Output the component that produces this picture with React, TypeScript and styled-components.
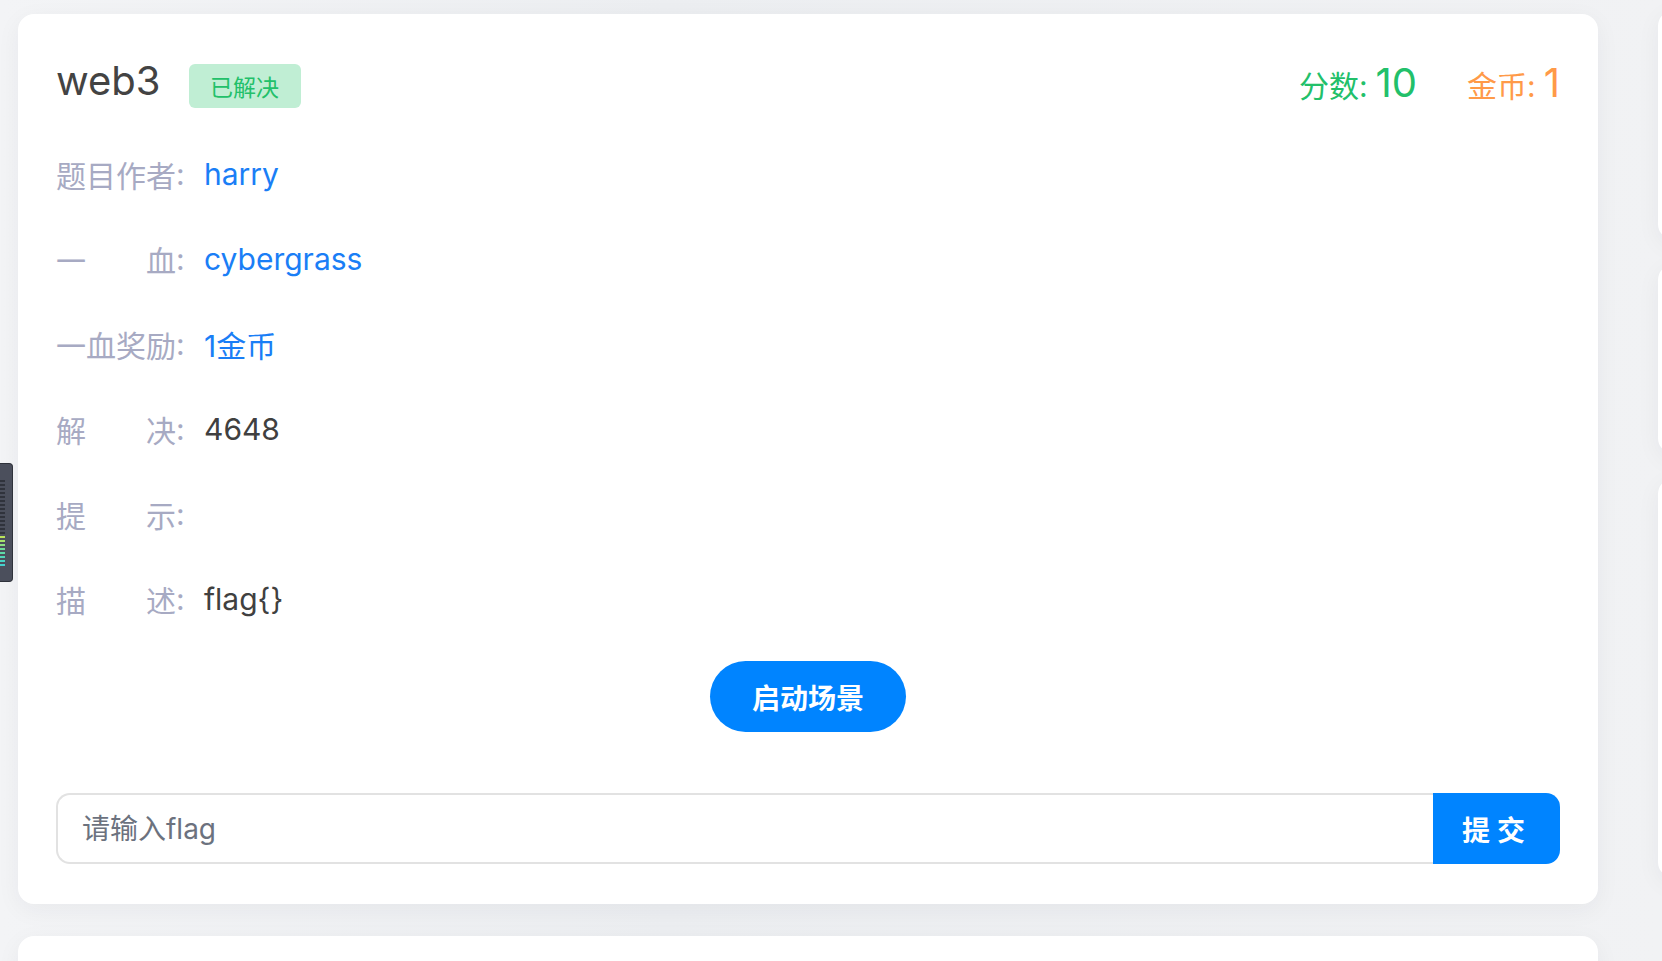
import React, { useState } from 'react'
import styled, { createGlobalStyle } from 'styled-components'

const GlobalStyle = createGlobalStyle`
  html, body {
    margin: 0;
    padding: 0;
    background: #eff0f3;
  }
  body {
    font-family: Inter, "Noto Sans CJK SC", "Noto Sans", sans-serif;
    color: #444;
  }
  * {
    box-sizing: border-box;
  }
`

const Page = styled.div`
  display: flex;
  gap: 60px;
  height: 961px;
  overflow: hidden;
  padding: 14px 0 0 18px;
  background: linear-gradient(90deg, #f3f4f6 0%, #eceef1 40%, #f1f2f4 100%);
`

const MainColumn = styled.div`
  display: flex;
  flex-direction: column;
  gap: 32px;
  width: 1580px;
  flex-shrink: 0;
`

const SideColumn = styled.div`
  display: flex;
  flex-direction: column;
  gap: 24px;
  width: 300px;
  flex-shrink: 0;
  margin-top: -4px;
`

const Card = styled.div<{ $height?: number }>`
  background: #fff;
  border-radius: 16px;
  padding: 39px 38px 40px 38px;
  box-shadow: 0 6px 24px rgba(30, 40, 60, 0.05);
  ${({ $height }) => ($height ? `height: ${$height}px;` : '')}
  flex-shrink: 0;
`

const Header = styled.div`
  display: flex;
  align-items: center;
  justify-content: space-between;
  height: 56px;
`

const TitleGroup = styled.div`
  display: flex;
  align-items: center;
  gap: 28px;
`

const Title = styled.h2`
  margin: 0;
  font-size: 40px;
  font-weight: 400;
  line-height: 52px;
  color: #434343;
`

const Badge = styled.span`
  display: inline-flex;
  align-items: center;
  justify-content: center;
  width: 112px;
  height: 44px;
  margin-top: 10px;
  border-radius: 6px;
  background: #c0eed4;
  color: #22c06a;
  font-size: 23px;
`

const Scores = styled.div`
  display: flex;
  align-items: baseline;
  gap: 50px;
  margin-top: 2px;
`

const Score = styled.span<{ $color: string }>`
  color: ${({ $color }) => $color};
  font-size: 30px;
  display: inline-flex;
  align-items: baseline;
  gap: 8px;
`

const ScoreNum = styled.span`
  font-size: 40px;
`

const InfoList = styled.div`
  margin-top: 22px;
  display: flex;
  flex-direction: column;
`

const InfoRow = styled.div`
  display: flex;
  align-items: center;
  height: 85px;
  font-size: 30px;
`

const Label = styled.span`
  display: inline-flex;
  align-items: center;
  width: 148px;
  flex-shrink: 0;
  color: #a7aac3;
`

const LabelText = styled.span`
  display: inline-block;
  width: 120px;
  text-align: justify;
  text-align-last: justify;
`

const Value = styled.span<{ $link?: boolean }>`
  color: ${({ $link }) => ($link ? '#1a7ef6' : '#404040')};
`

const ButtonRow = styled.div`
  display: flex;
  justify-content: center;
  margin-top: 20px;
`

const LaunchButton = styled.button`
  width: 196px;
  height: 71px;
  border: none;
  border-radius: 36px;
  background: #0084ff;
  color: #fff;
  font-family: inherit;
  font-size: 28px;
  font-weight: 700;
  cursor: pointer;
`

const FlagForm = styled.form`
  display: flex;
  margin-top: 61px;
  height: 71px;
`

const FlagInput = styled.input`
  flex: 1;
  height: 100%;
  border: 2px solid #e2e2e2;
  border-right: none;
  border-radius: 14px 0 0 14px;
  padding: 0 24px;
  font-family: inherit;
  font-size: 28px;
  color: #404040;
  outline: none;
  &::placeholder {
    color: #6c727e;
  }
`

const SubmitButton = styled.button`
  width: 127px;
  height: 100%;
  border: none;
  border-radius: 0 14px 14px 0;
  background: #0084ff;
  color: #fff;
  font-family: inherit;
  font-size: 28px;
  font-weight: 700;
  letter-spacing: 7px;
  padding-left: 7px;
  cursor: pointer;
`

const SideTab = styled.div`
  position: fixed;
  left: 0;
  top: 463px;
  width: 13px;
  height: 119px;
  background: #4b4f5c;
  border: 1px solid #2f323b;
  border-left: none;
  border-radius: 0 4px 4px 0;
  display: flex;
  flex-direction: column;
  justify-content: center;
  gap: 2px;
  padding: 14px 0;
`

const TabBar = styled.span<{ $color: string }>`
  display: block;
  width: 5px;
  height: 2px;
  background: ${({ $color }) => $color};
`

const info: { label: string; value: string; link?: boolean }[] = [
  { label: '题目作者', value: 'harry', link: true },
  { label: '一血', value: 'cybergrass', link: true },
  { label: '一血奖励', value: '1金币', link: true },
  { label: '解决', value: '4648' },
  { label: '提示', value: '' },
  { label: '描述', value: 'flag{}' },
]

const tabColors = [
  '#30333c', '#30333c', '#30333c', '#30333c', '#30333c', '#30333c', '#30333c',
  '#30333c', '#30333c', '#30333c', '#30333c', '#30333c', '#30333c', '#30333c',
  '#b9e25a', '#a6e36a', '#8de082', '#6fdc98', '#5fd9a8', '#52d6b8', '#48d3c4', '#45d0cc',
]

export default function App(): React.ReactElement {
  const [flag, setFlag] = useState('')

  return (
    <>
      <GlobalStyle />
      <Page>
        <MainColumn>
          <Card>
            <Header>
              <TitleGroup>
                <Title>web3</Title>
                <Badge>已解决</Badge>
              </TitleGroup>
              <Scores>
                <Score $color="#22c06a">
                  分数: <ScoreNum>10</ScoreNum>
                </Score>
                <Score $color="#ff9a48">
                  金币: <ScoreNum>1</ScoreNum>
                </Score>
              </Scores>
            </Header>
            <InfoList>
              {info.map(row => (
                <InfoRow key={row.label}>
                  <Label>
                    <LabelText>{row.label}</LabelText>:
                  </Label>
                  <Value $link={row.link}>{row.value}</Value>
                </InfoRow>
              ))}
            </InfoList>
            <ButtonRow>
              <LaunchButton type="button">启动场景</LaunchButton>
            </ButtonRow>
            <FlagForm onSubmit={e => e.preventDefault()}>
              <FlagInput
                placeholder="请输入flag"
                value={flag}
                onChange={e => setFlag(e.target.value)}
              />
              <SubmitButton type="submit">提交</SubmitButton>
            </FlagForm>
          </Card>
          <Card $height={400} />
        </MainColumn>
        <SideColumn>
          <Card $height={230} />
          <Card $height={190} />
          <Card $height={400} />
        </SideColumn>
      </Page>
      <SideTab>
        {tabColors.map((c, i) => (
          <TabBar key={i} $color={c} />
        ))}
      </SideTab>
    </>
  )
}
